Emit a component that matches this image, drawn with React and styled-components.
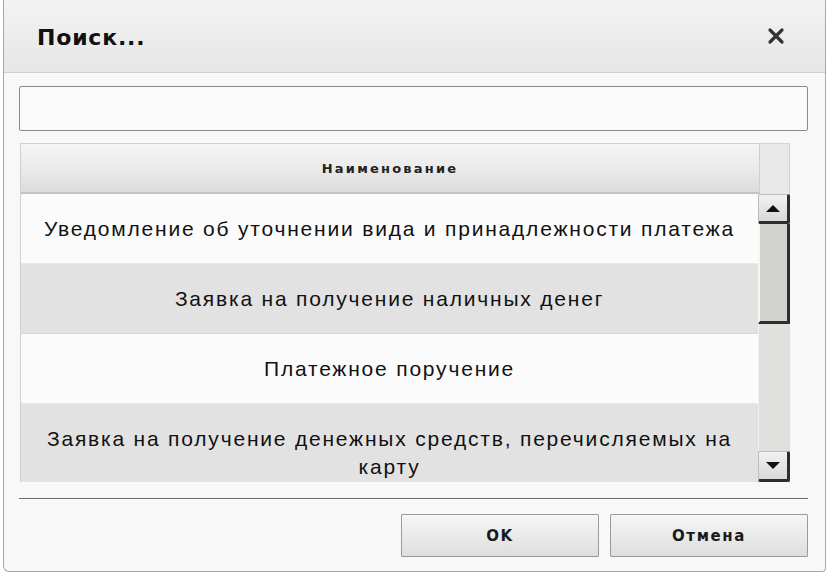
import React from "react";
import styled, { createGlobalStyle } from "styled-components";

const GlobalStyle = createGlobalStyle`
  html, body {
    margin: 0;
    padding: 0;
    background: #ffffff;
  }
  body {
    font-family: "Liberation Sans", Arial, sans-serif;
    color: #111;
  }
`;

const rows = [
  "Уведомление об уточнении вида и принадлежности платежа",
  "Заявка на получение наличных денег",
  "Платежное поручение",
  "Заявка на получение денежных средств, перечисляемых на карту",
];

const Dialog = styled.div`
  box-sizing: border-box;
  width: 823px;
  height: 572px;
  margin-left: 3px;
  background: #f8f8f8;
  border: 1px solid #a8a8a8;
  border-top: none;
  border-radius: 0 0 4px 6px;
  display: flex;
  flex-direction: column;
`;

const TitleBar = styled.div`
  box-sizing: border-box;
  height: 73px;
  flex-shrink: 0;
  display: flex;
  align-items: center;
  justify-content: space-between;
  padding: 0 38px 0 33px;
  background: linear-gradient(#f3f3f3, #e6e6e6);
  border-bottom: 1px solid #cfcfcf;
`;

const Title = styled.h1`
  margin: 0;
  padding-top: 2px;
  font-family: "DejaVu Sans", Verdana, sans-serif;
  font-size: 22px;
  font-weight: bold;
  letter-spacing: 0.8px;
  color: #111;
`;

const CloseButton = styled.button`
  width: 22px;
  height: 22px;
  padding: 0;
  border: none;
  background: transparent;
  color: #333;
  display: flex;
  align-items: center;
  justify-content: center;
  cursor: pointer;
`;

const Body = styled.div`
  flex: 1;
  display: flex;
  flex-direction: column;
  padding: 13px 16px 0 15px;
`;

const SearchInput = styled.input`
  box-sizing: border-box;
  width: 789px;
  height: 45px;
  margin: 0;
  border: 1px solid #8a8a8a;
  border-radius: 2px;
  background: #fafafa;
  outline: none;
`;

const Grid = styled.div`
  width: 770px;
  margin: 12px 0 0 1px;
  display: flex;
  flex-direction: column;
`;

const HeaderRow = styled.div`
  display: flex;
  height: 51px;
`;

const HeaderCell = styled.div`
  box-sizing: border-box;
  width: 740px;
  display: flex;
  align-items: center;
  justify-content: center;
  background: linear-gradient(#f4f4f4 0%, #ececec 45%, #dcdcdc 100%);
  border: 1px solid #cfcfcf;
  border-bottom: 2px solid #c4c4c4;
  font-family: "DejaVu Sans", Verdana, sans-serif;
  font-size: 13px;
  font-weight: bold;
  letter-spacing: 2.2px;
  color: #222;
`;

const HeaderCorner = styled.div`
  flex: 1;
  background: #e9e9e9;
  border-top: 1px solid #d4d4d4;
  border-right: 1px solid #d0d0d0;
`;

const ListArea = styled.div`
  display: flex;
  height: 288px;
`;

const RowList = styled.div`
  width: 738px;
  overflow: hidden;
  border-left: 1px solid #d0d0d0;
`;

const Row = styled.div`
  box-sizing: border-box;
  min-height: ${(p) => (p.$tall ? 98 : 70)}px;
  display: flex;
  align-items: center;
  justify-content: center;
  padding: 0 14px;
  text-align: center;
  background: ${(p) => (p.$alt ? "#e2e2e2" : "#fbfbfb")};
  border-bottom: 1px solid ${(p) => (p.$alt ? "#d8d8d8" : "#e8e8e8")};
  font-family: "Liberation Sans", Arial, sans-serif;
  font-size: 21px;
  line-height: 28px;
  letter-spacing: 1.8px;
  color: #111;
`;

const ScrollBar = styled.div`
  width: 32px;
  display: flex;
  flex-direction: column;
  background: #e3e3e1;
`;

const ArrowButton = styled.div`
  box-sizing: border-box;
  height: ${(p) => p.$h}px;
  display: flex;
  align-items: center;
  justify-content: center;
  background: linear-gradient(#f2f2f2, #d8d8d8);
  border: 1px solid #bdbdbd;
  border-right: 3px solid #2e2e2e;
  border-bottom: 3px solid #2e2e2e;
  border-radius: 2px;
`;

const Triangle = styled.span`
  width: 0;
  height: 0;
  border-left: 7px solid transparent;
  border-right: 7px solid transparent;
  ${(p) =>
    p.$up ? "border-bottom: 7px solid #111;" : "border-top: 7px solid #111;"}
`;

const Thumb = styled.div`
  box-sizing: border-box;
  height: 100px;
  background: #d3d3cf;
  border-left: 2px solid #f6f6f6;
  border-right: 3px solid #2e2e2e;
  border-bottom: 3px solid #2e2e2e;
`;

const Track = styled.div`
  flex: 1;
  background: #e0e0de;
  border-left: 1px solid #f0f0f0;
`;

const Separator = styled.div`
  width: 789px;
  height: 1px;
  margin-top: 16px;
  background: #6a6a6a;
  box-shadow: 0 1px 0 #ffffff;
`;

const Footer = styled.div`
  display: flex;
  justify-content: flex-end;
  gap: 11px;
  width: 789px;
  margin-top: 15px;
`;

const Button = styled.button`
  box-sizing: border-box;
  width: 198px;
  height: 43px;
  border: 1px solid #9a9a9a;
  border-radius: 1px;
  background: linear-gradient(#f6f6f6, #dedede);
  font-family: "DejaVu Sans", Verdana, sans-serif;
  font-size: 15px;
  font-weight: bold;
  letter-spacing: 1.6px;
  color: #1a1a1a;
  cursor: pointer;
`;

export default function App() {
  return (
    <>
      <GlobalStyle />
      <Dialog>
        <TitleBar>
          <Title>Поиск...</Title>
          <CloseButton aria-label="Закрыть">
            <svg width="18" height="18" viewBox="0 0 18 18">
              <path
                d="M3 3 L15 15 M15 3 L3 15"
                stroke="#333"
                strokeWidth="3.2"
                strokeLinecap="round"
              />
            </svg>
          </CloseButton>
        </TitleBar>
        <Body>
          <SearchInput />
          <Grid>
            <HeaderRow>
              <HeaderCell>Наименование</HeaderCell>
              <HeaderCorner />
            </HeaderRow>
            <ListArea>
              <RowList>
                {rows.map((text, i) => (
                  <Row key={i} $alt={i % 2 === 1} $tall={i === 3}>
                    {text}
                  </Row>
                ))}
              </RowList>
              <ScrollBar>
                <ArrowButton $h={30}>
                  <Triangle $up />
                </ArrowButton>
                <Thumb />
                <Track />
                <ArrowButton $h={31}>
                  <Triangle />
                </ArrowButton>
              </ScrollBar>
            </ListArea>
          </Grid>
          <Separator />
          <Footer>
            <Button>OK</Button>
            <Button>Отмена</Button>
          </Footer>
        </Body>
      </Dialog>
    </>
  );
}
